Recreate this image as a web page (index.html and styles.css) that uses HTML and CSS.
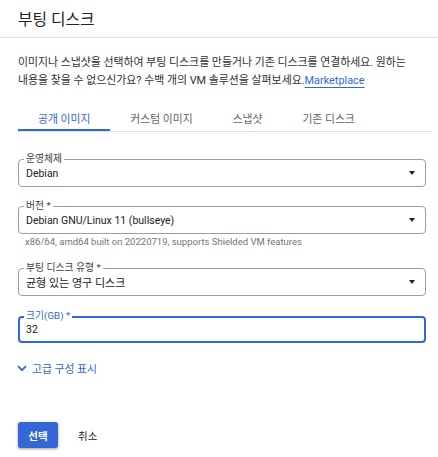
FILE: index.html
```html
<!DOCTYPE html>
<html lang="ko">
<head>
<meta charset="utf-8">
<link rel="stylesheet" href="styles.css">
</head>
<body>
<div class="dialog">
  <header class="head"><h1 class="title">부팅 디스크</h1></header>
  <div class="content">
    <p class="desc">이미지나 스냅샷을 선택하여 부팅 디스크를 만들거나 기존 디스크를 연결하세요. 원하는<br>내용을 찾을 수 없으신가요? 수백 개의 VM 솔루션을 살펴보세요.<a class="mlink" href="#">Marketplace</a></p>
    <nav class="tabs">
      <div class="tab active">공개 이미지</div>
      <div class="tab">커스텀 이미지</div>
      <div class="tab">스냅샷</div>
      <div class="tab">기존 디스크</div>
    </nav>
    <div class="field f1">
      <div class="box">
        <span class="label">운영체제</span>
        <span class="value">Debian</span>
        <span class="arrow"></span>
      </div>
    </div>
    <div class="field f2">
      <div class="box">
        <span class="label">버전 *</span>
        <span class="value">Debian GNU/Linux 11 (bullseye)</span>
        <span class="arrow"></span>
      </div>
      <div class="hint">x86/64, amd64 built on 20220719, supports Shielded VM features</div>
    </div>
    <div class="field f3">
      <div class="box">
        <span class="label">부팅 디스크 유형 *</span>
        <span class="value kr">균형 있는 영구 디스크</span>
        <span class="arrow"></span>
      </div>
    </div>
    <div class="field f4">
      <div class="box focused">
        <span class="label">크기(GB) *</span>
        <span class="value">32</span>
      </div>
    </div>
    <a class="adv" href="#">
      <svg class="chev" width="10" height="7" viewBox="0 0 10 7"><path d="M1 1.2 L5 5.2 L9 1.2" fill="none" stroke="#3367d6" stroke-width="1.8"/></svg>
      <span>고급 구성 표시</span>
    </a>
    <div class="actions">
      <button class="btn primary">선택</button>
      <button class="btn plain">취소</button>
    </div>
  </div>
</div>
</body>
</html>
```

FILE: styles.css
```css
* { box-sizing: border-box; }
html, body { margin: 0; padding: 0; background: #fff; }
body {
  font-family: "Roboto", "Noto Sans CJK KR", sans-serif;
  color: #202124;
  width: 438px;
  height: 457px;
  overflow: hidden;
}
.head {
  height: 38px;
  border-bottom: 1px solid #e0e0e0;
  display: flex;
  align-items: center;
  padding: 0 18px 1px;
}
.title {
  margin: 0;
  font-size: 15.8px;
  font-weight: 400;
  color: #202124;
}
.content {
  padding: 0 12px 0 18px;
}
.desc {
  margin: 16px 0 0;
  font-size: 10.9px;
  line-height: 18px;
  color: #303134;
  white-space: nowrap;
}
.mlink {
  color: #3367d6;
  text-decoration: underline;
  text-underline-offset: 3px;
}
.tabs {
  margin-top: 14px;
  display: flex;
  height: 28px;
  border-bottom: 1px solid #e0e0e0;
  margin-right: -6px;
}
.tab {
  height: 27px;
  padding: 0 20px;
  display: flex;
  align-items: center;
  font-size: 10.8px;
  color: #5f6368;
  white-space: nowrap;
}
.tab.active {
  color: #3367d6;
  box-shadow: inset 0 -2px 0 #3367d6;
}
.field { width: 408px; }
.f1 { margin-top: 27px; }
.f2 { margin-top: 19px; }
.f3 { margin-top: 20px; }
.f4 { margin-top: 20px; }
.box {
  position: relative;
  height: 28px;
  border: 1px solid #9aa0a6;
  border-radius: 4px;
  display: flex;
  align-items: center;
  padding: 0 10px 0 7px;
}
.box.focused {
  border: 2px solid #3367d6;
  padding-left: 6px;
  height: 27px;
}
.label {
  position: absolute;
  left: 5px;
  top: -6px;
  padding: 0 2px;
  background: #fff;
  font-size: 9.8px;
  line-height: 10px;
  color: #3c4043;
  white-space: nowrap;
}
.focused .label {
  left: 4px;
  top: -7px;
  color: #3367d6;
}
.value {
  flex: 1;
  font-size: 10.5px;
  color: #202124;
  white-space: nowrap;
}
.value.kr { font-size: 11px; }
.arrow {
  width: 0;
  height: 0;
  border-left: 3.5px solid transparent;
  border-right: 3.5px solid transparent;
  border-top: 4px solid #202124;
}
.hint {
  margin-top: 2px;
  padding-left: 7px;
  font-size: 9.5px;
  line-height: 12px;
  color: #70757a;
}
.adv {
  margin-top: 17px;
  display: flex;
  align-items: center;
  gap: 5px;
  height: 16px;
  color: #3367d6;
  text-decoration: none;
  font-size: 10.8px;
  margin-left: -1px;
}
.chev { display: block; }
.actions {
  margin-top: 46px;
  display: flex;
  align-items: center;
  gap: 12px;
}
.btn {
  font-family: inherit;
  border: none;
  cursor: pointer;
  font-size: 10.5px;
  height: 26px;
  padding: 0;
}
.primary {
  width: 40px;
  background: #3367d6;
  color: #fff;
  font-weight: 700;
  border-radius: 3px;
  box-shadow: 0 1px 2px rgba(60,64,67,.35), 0 1px 3px 1px rgba(60,64,67,.15);
}
.plain {
  background: transparent;
  color: #202124;
  padding: 0 8px;
}
```
